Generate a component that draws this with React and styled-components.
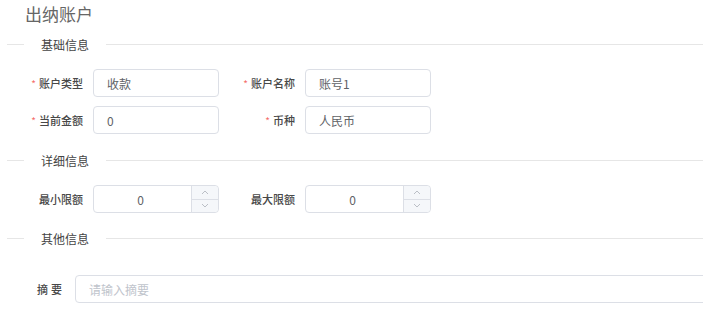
import React from "react";
import styled, { createGlobalStyle } from "styled-components";

const GlobalStyle = createGlobalStyle`
  html, body {
    margin: 0;
    padding: 0;
    background: #fff;
    font-family: "Noto Sans CJK SC", "Noto Sans", sans-serif;
    overflow: hidden;
  }
`;

const Page = styled.div`
  width: 703px;
  height: 309px;
  padding: 4px 0 0 7px;
  box-sizing: border-box;
  overflow: hidden;
`;

const Title = styled.h1`
  margin: 0 0 0 18px;
  font-size: 17px;
  line-height: 20px;
  font-weight: 400;
  color: #666;
`;

const Divider = styled.div`
  display: flex;
  align-items: center;
  margin: ${({ $top }) => $top}px 0 0;
  height: 20px;

  &::before,
  &::after {
    content: "";
    height: 1px;
    background: #e6e6e6;
  }
  &::before {
    width: 17px;
  }
  &::after {
    flex: 1;
  }

  span {
    padding: 0 17px;
    font-size: 12px;
    color: #444;
    white-space: nowrap;
  }
`;

const Row = styled.div`
  display: flex;
  align-items: center;
  margin-top: ${({ $top }) => $top}px;
  height: 28px;
`;

const Item = styled.div`
  display: flex;
  align-items: center;
  width: 212px;
  flex-shrink: 0;
`;

const Label = styled.label`
  width: ${({ $w }) => $w || 86}px;
  flex-shrink: 0;
  padding-right: 10px;
  box-sizing: border-box;
  text-align: right;
  font-size: 11px;
  font-weight: 500;
  color: #484848;
  white-space: nowrap;
  letter-spacing: ${({ $ls }) => $ls || 0}px;

  i {
    font-style: normal;
    color: #f56c6c;
    font-size: 10px;
    font-weight: 400;
    margin-right: 3px;
  }
`;

const Input = styled.div`
  width: ${({ $w }) => $w || 126}px;
  flex-shrink: 0;
  height: 28px;
  box-sizing: border-box;
  border: 1px solid #dcdfe6;
  border-radius: 4px;
  display: flex;
  align-items: center;
  padding-left: 13px;
  font-size: 12px;
  color: ${({ $placeholder }) => ($placeholder ? "#c0c4cc" : "#606266")};
  background: #fff;
`;

const NumberBox = styled.div`
  width: 126px;
  flex-shrink: 0;
  height: 28px;
  box-sizing: border-box;
  border: 1px solid #dcdfe6;
  border-radius: 4px;
  display: flex;
  font-size: 12px;
  color: #606266;
`;

const NumberValue = styled.div`
  flex: 1;
  display: flex;
  align-items: center;
  justify-content: center;
  padding-right: 4px;
`;

const Steps = styled.div`
  width: 26px;
  border-left: 1px solid #dcdfe6;
  background: #f5f7fa;
  display: flex;
  flex-direction: column;
  border-radius: 0 4px 4px 0;
`;

const Step = styled.div`
  flex: 1;
  display: flex;
  align-items: center;
  justify-content: center;
  & + & {
    border-top: 1px solid #dcdfe6;
  }
`;

const Chevron = ({ up }) => (
  <svg width="8" height="5" viewBox="0 0 8 5">
    <path
      d={up ? "M1 4 L4 1 L7 4" : "M1 1 L4 4 L7 1"}
      fill="none"
      stroke="#b4b8c0"
      strokeWidth="0.9"
    />
  </svg>
);

const NumberInput = ({ value }) => (
  <NumberBox>
    <NumberValue>{value}</NumberValue>
    <Steps>
      <Step>
        <Chevron up />
      </Step>
      <Step>
        <Chevron />
      </Step>
    </Steps>
  </NumberBox>
);

const App = () => (
  <>
    <GlobalStyle />
    <Page>
      <Title>出纳账户</Title>
      <Divider $top={10}>
        <span>基础信息</span>
      </Divider>
      <Row $top={15}>
        <Item>
          <Label>
            <i>*</i>账户类型
          </Label>
          <Input>收款</Input>
        </Item>
        <Item>
          <Label>
            <i>*</i>账户名称
          </Label>
          <Input>账号1</Input>
        </Item>
      </Row>
      <Row $top={9}>
        <Item>
          <Label>
            <i>*</i>当前金额
          </Label>
          <Input>0</Input>
        </Item>
        <Item>
          <Label>
            <i>*</i>币种
          </Label>
          <Input>人民币</Input>
        </Item>
      </Row>
      <Divider $top={16}>
        <span>详细信息</span>
      </Divider>
      <Row $top={15}>
        <Item>
          <Label>最小限额</Label>
          <NumberInput value="0" />
        </Item>
        <Item>
          <Label>最大限额</Label>
          <NumberInput value="0" />
        </Item>
      </Row>
      <Divider $top={15}>
        <span>其他信息</span>
      </Divider>
      <Row $top={27}>
        <Label $w={68} $ls={3}>
          摘要
        </Label>
        <Input $w={640} $placeholder>
          请输入摘要
        </Input>
      </Row>
    </Page>
  </>
);

export default App;
